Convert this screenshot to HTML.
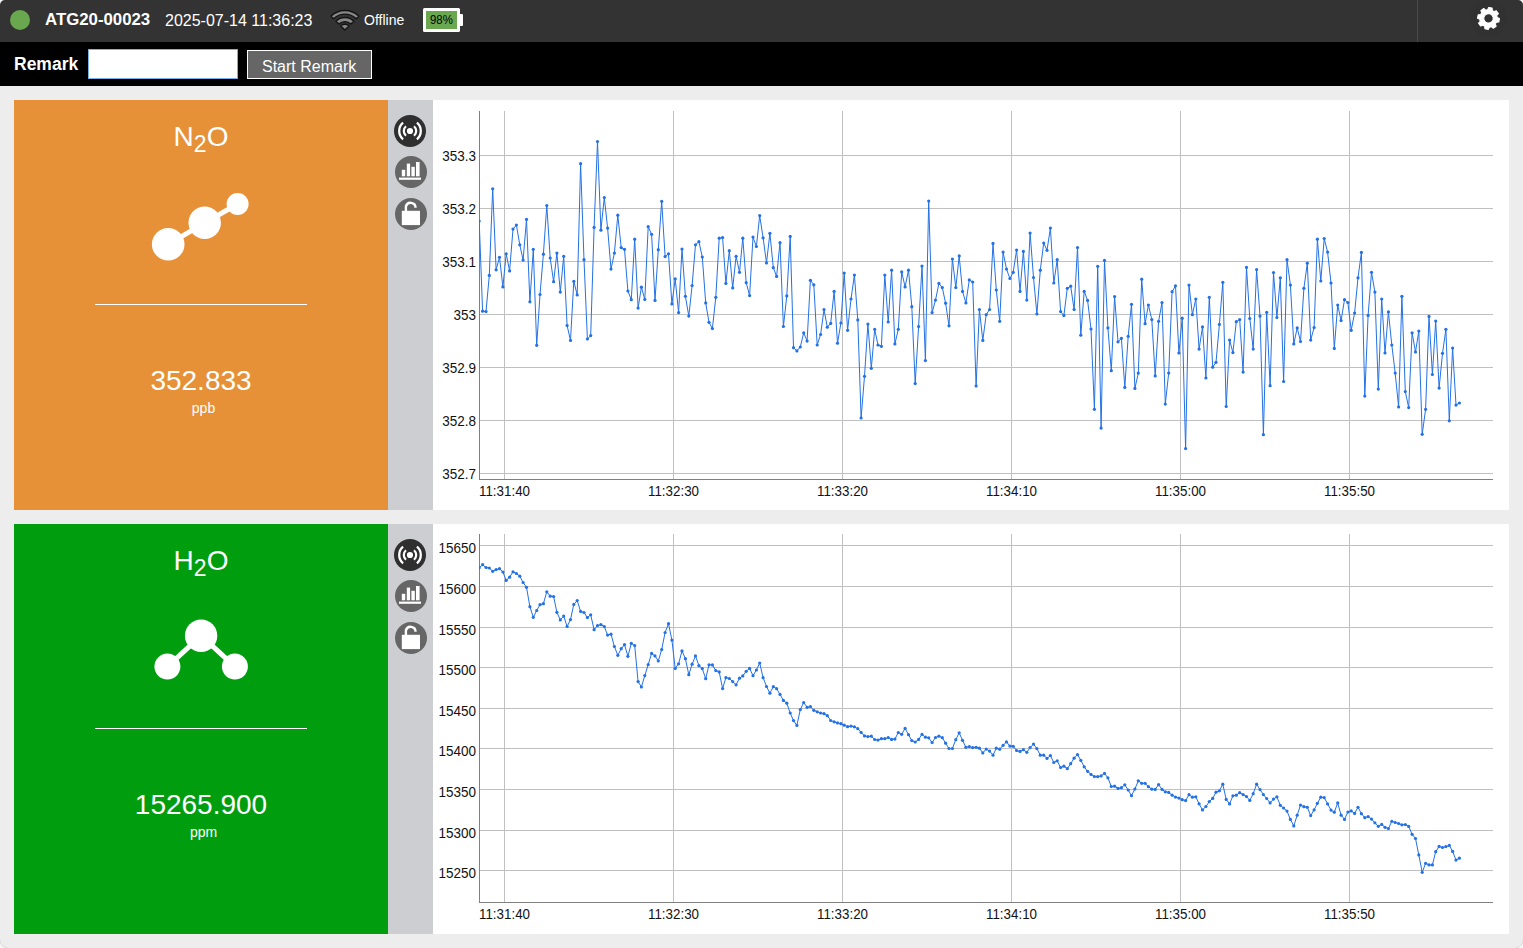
<!DOCTYPE html>
<html><head><meta charset="utf-8"><title>ATG20-00023</title>
<style>
*{box-sizing:border-box}
html,body{margin:0;padding:0}
body{width:1523px;height:948px;overflow:hidden;background:#ededed;font-family:"Liberation Sans",sans-serif;position:relative}
.abs{position:absolute;white-space:nowrap;line-height:1}
#hdr{position:absolute;left:0;top:0;width:1523px;height:42px;background:#333333}
#sep{position:absolute;left:1417px;top:0;width:1px;height:42px;background:#4a4a4a}
#rbar{position:absolute;left:0;top:42px;width:1523px;height:44px;background:#000}
#inp{position:absolute;left:88px;top:49px;width:150px;height:30px;background:#fff;border:1px solid #78b0ea}
#btn{position:absolute;left:247px;top:50px;width:125px;height:29px;background:#666;border:1px solid #fff}
.panel{position:absolute;left:14px;width:374px;height:410px}
.side{position:absolute;left:388px;width:45px;height:410px;background:#cdced2}
.cwrap{position:absolute;left:433px;width:1076px;height:410px;background:#fff}
svg.chart{position:absolute}
.ptitle{position:absolute;left:14px;width:374px;text-align:center;color:#fff;font-size:28px;line-height:30px;white-space:nowrap}
.ptitle sub{font-size:23px;line-height:0;vertical-align:-6px}
.hr{position:absolute;left:95px;width:212px;height:1px;background:#fff}
.pval{position:absolute;left:14px;width:374px;text-align:center;color:#fff;font-size:28px;line-height:30px;white-space:nowrap}
.punit{position:absolute;left:16.5px;width:374px;text-align:center;color:#fff;font-size:14px;line-height:16px;white-space:nowrap}
</style></head><body>
<div id="hdr"></div>
<div id="sep"></div>
<svg class="abs" style="left:0;top:0" width="1523" height="42">
  <circle cx="20" cy="20" r="10" fill="#6aa84f"/>
  <!-- wifi -->
  <g fill="#888888" stroke="#141414" stroke-width="1.4" stroke-linejoin="round">
    <path d="M344.9 30.1 L340.8 26 A5.8 5.8 0 0 1 349 26 Z"/>
    <path d="M338.9 24.1 A8.5 8.5 0 0 1 350.9 24.1 L353.8 21.2 A12.6 12.6 0 0 0 336 21.2 Z"/>
    <path d="M333.6 18.8 A16 16 0 0 1 356.2 18.8 L358.8 16.2 A19.7 19.7 0 0 0 331 16.2 Z"/>
  </g>
  <!-- battery -->
  <rect x="423" y="8" width="37" height="24" rx="1.5" fill="#ffffff"/>
  <rect x="459" y="14" width="4" height="12" rx="1" fill="#ffffff"/>
  <rect x="426" y="11" width="31" height="18" fill="#6aa84f"/>
  <!-- gear -->
  <circle cx="1488.5" cy="18.4" r="18" fill="#313131"/>
  <g transform="translate(1488.5 18.4) rotate(10)">
    <path fill="#ffffff" stroke="#ffffff" stroke-width="1" stroke-linejoin="round" fill-rule="evenodd" d="M-2.39 -8.47 L-1.81 -10.85 L1.81 -10.85 L2.39 -8.47 L4.30 -7.68 L6.40 -8.95 L8.95 -6.40 L7.68 -4.30 L8.47 -2.39 L10.85 -1.81 L10.85 1.81 L8.47 2.39 L7.68 4.30 L8.95 6.40 L6.40 8.95 L4.30 7.68 L2.39 8.47 L1.81 10.85 L-1.81 10.85 L-2.39 8.47 L-4.30 7.68 L-6.40 8.95 L-8.95 6.40 L-7.68 4.30 L-8.47 2.39 L-10.85 1.81 L-10.85 -1.81 L-8.47 -2.39 L-7.68 -4.30 L-8.95 -6.40 L-6.40 -8.95 L-4.30 -7.68 Z M4.70 0.00 A4.7 4.7 0 1 0 -4.70 0.00 A4.7 4.7 0 1 0 4.70 0.00 Z"/>
  </g>
</svg>
<div class="abs" style="left:45px;top:12px;font-size:16px;font-weight:bold;color:#fff;transform:scaleX(1.05);transform-origin:0 0">ATG20-00023</div>
<div class="abs" style="left:165px;top:13px;font-size:16px;color:#fff">2025-07-14 11:36:23</div>
<div class="abs" style="left:364px;top:13px;font-size:14px;color:#fff">Offline</div>
<div class="abs" style="left:430px;top:14px;font-size:12px;color:#000;transform:scaleX(0.95);transform-origin:0 0">98%</div>

<div id="rbar"></div>
<div class="abs" style="left:14px;top:55.5px;font-size:17.5px;font-weight:bold;color:#fff">Remark</div>
<div id="inp"></div>
<div id="btn"></div>
<div class="abs" style="left:262px;top:59px;font-size:16px;color:#fff">Start Remark</div>

<!-- Panel 1 -->
<div class="panel" style="top:100px;background:#e69138"></div>
<div class="side" style="top:100px"></div>
<div class="cwrap" style="top:100px"></div>
<svg class="abs" style="left:388px;top:100px" width="45" height="140" viewBox="388 100 45 140">
<circle cx="410" cy="131" r="16" fill="#2f2f2f"/>
<circle cx="410" cy="131" r="3.1" fill="#fff"/>
<path d="M406.01 126.25 A6.2 6.2 0 0 0 406.01 135.75" fill="none" stroke="#fff" stroke-width="2.2"/>
<path d="M413.99 126.25 A6.2 6.2 0 0 1 413.99 135.75" fill="none" stroke="#fff" stroke-width="2.2"/>
<path d="M403.06 122.73 A10.8 10.8 0 0 0 403.06 139.27" fill="none" stroke="#fff" stroke-width="2.3"/>
<path d="M416.94 122.73 A10.8 10.8 0 0 1 416.94 139.27" fill="none" stroke="#fff" stroke-width="2.3"/>
<circle cx="411" cy="172" r="16" fill="#666666"/>
<rect x="401.8" y="169.8" width="3.40" height="6.50" fill="#fff"/>
<rect x="406.8" y="163.6" width="3.30" height="12.70" fill="#fff"/>
<rect x="411.4" y="166.8" width="3.40" height="9.50" fill="#fff"/>
<rect x="416.0" y="162.0" width="3.60" height="14.30" fill="#fff"/>
<rect x="399" y="177.6" width="22" height="2.2" fill="#fff"/>
<circle cx="411" cy="214" r="16" fill="#666666"/>
<rect x="401.8" y="210.8" width="18.2" height="14.3" fill="#fff"/>
<path d="M405.90 211 L405.90 206.40 A4.9 4.9 0 0 1 415.53 207.67" fill="none" stroke="#fff" stroke-width="2.4"/>
</svg>
<div class="ptitle" style="top:121.5px">N<sub>2</sub>O</div>
<svg class="abs" style="left:14px;top:100px" width="374" height="200" viewBox="14 100 374 200"><path d="M168.2 244.3 L204.7 222.8 L237.6 204" stroke="#fff" stroke-width="5" fill="none"/><circle cx="168.2" cy="244.3" r="16.3" fill="#fff"/><circle cx="204.7" cy="222.8" r="16.2" fill="#fff"/><circle cx="237.6" cy="204" r="11" fill="#fff"/></svg>
<div class="hr" style="top:304px"></div>
<div class="pval" style="top:366px">352.833</div>
<div class="punit" style="top:400px">ppb</div>
<svg class="chart" width="1076" height="410" viewBox="433 100 1076 410" style="left:433px;top:100px">
<g shape-rendering="crispEdges">
<rect x="480" y="155" width="1013" height="1" fill="#c0c0c0"/>
<rect x="480" y="208" width="1013" height="1" fill="#c0c0c0"/>
<rect x="480" y="261" width="1013" height="1" fill="#c0c0c0"/>
<rect x="480" y="314" width="1013" height="1" fill="#c0c0c0"/>
<rect x="480" y="367" width="1013" height="1" fill="#c0c0c0"/>
<rect x="480" y="420" width="1013" height="1" fill="#c0c0c0"/>
<rect x="480" y="473" width="1013" height="1" fill="#c0c0c0"/>
<rect x="504" y="111" width="1" height="368" fill="#c0c0c0"/>
<rect x="673" y="111" width="1" height="368" fill="#c0c0c0"/>
<rect x="842" y="111" width="1" height="368" fill="#c0c0c0"/>
<rect x="1011" y="111" width="1" height="368" fill="#c0c0c0"/>
<rect x="1180" y="111" width="1" height="368" fill="#c0c0c0"/>
<rect x="1349" y="111" width="1" height="368" fill="#c0c0c0"/>
<rect x="479" y="111" width="1" height="369" fill="#808080"/>
<rect x="479" y="479" width="1014" height="1" fill="#808080"/>
</g>
<g font-family="Liberation Sans, sans-serif" font-size="14" fill="#111111">
<text transform="translate(476 161) scale(0.965 1)" text-anchor="end">353.3</text>
<text transform="translate(476 214) scale(0.965 1)" text-anchor="end">353.2</text>
<text transform="translate(476 267) scale(0.965 1)" text-anchor="end">353.1</text>
<text transform="translate(476 320) scale(0.965 1)" text-anchor="end">353</text>
<text transform="translate(476 373) scale(0.965 1)" text-anchor="end">352.9</text>
<text transform="translate(476 426) scale(0.965 1)" text-anchor="end">352.8</text>
<text transform="translate(476 479) scale(0.965 1)" text-anchor="end">352.7</text>
<text transform="translate(504.5 496) scale(0.955 1)" text-anchor="middle">11:31:40</text>
<text transform="translate(673.5 496) scale(0.955 1)" text-anchor="middle">11:32:30</text>
<text transform="translate(842.5 496) scale(0.955 1)" text-anchor="middle">11:33:20</text>
<text transform="translate(1011.5 496) scale(0.955 1)" text-anchor="middle">11:34:10</text>
<text transform="translate(1180.5 496) scale(0.955 1)" text-anchor="middle">11:35:00</text>
<text transform="translate(1349.5 496) scale(0.955 1)" text-anchor="middle">11:35:50</text>
</g>
<defs><clipPath id="clip100"><rect x="479" y="111" width="1014" height="368"/></clipPath></defs>
<g clip-path="url(#clip100)">
<polyline points="479.2,221.1 482.6,311.2 486.0,311.6 489.3,275.4 492.7,188.8 496.1,269.8 499.5,257.3 502.9,286.9 506.2,253.8 509.6,270.9 513.0,229.1 516.4,225.0 519.8,244.8 523.1,260.1 526.5,219.4 529.9,301.8 533.3,249.3 536.7,345.3 540.0,294.5 543.4,254.2 546.8,205.5 550.2,258.0 553.6,281.7 556.9,253.1 560.3,292.1 563.7,256.3 567.1,325.5 570.5,340.4 573.8,281.3 577.2,294.9 580.6,163.7 584.0,259.7 587.4,339.0 590.7,335.6 594.1,227.4 597.5,141.5 600.9,230.2 604.3,197.5 607.6,228.1 611.0,269.1 614.4,253.1 617.8,215.2 621.2,247.6 624.5,249.3 627.9,291.0 631.3,299.7 634.7,239.2 638.1,308.1 641.4,287.2 644.8,299.4 648.2,226.7 651.6,234.3 655.0,300.4 658.3,249.7 661.7,201.3 665.1,256.6 668.5,253.8 671.9,303.9 675.2,278.9 678.6,312.6 682.0,249.0 685.4,296.3 688.8,316.1 692.1,285.5 695.5,244.8 698.9,241.7 702.3,257.0 705.7,302.9 709.0,322.3 712.4,328.6 715.8,297.3 719.2,238.2 722.6,237.5 725.9,283.4 729.3,250.7 732.7,287.9 736.1,256.3 739.5,272.3 742.8,238.2 746.2,282.7 749.6,295.6 753.0,237.1 756.4,246.5 759.7,215.6 763.1,237.8 766.5,262.9 769.9,233.3 773.3,267.7 776.6,276.4 780.0,242.7 783.4,326.5 786.8,295.9 790.2,236.4 793.5,347.7 796.9,350.9 800.3,347.0 803.7,332.8 807.1,341.1 810.4,280.3 813.8,284.8 817.2,345.0 820.6,334.5 824.0,309.5 827.3,327.2 830.7,323.4 834.1,291.4 837.5,343.2 840.9,323.0 844.2,273.0 847.6,330.3 851.0,299.0 854.4,275.0 857.8,319.9 861.1,418.0 864.5,376.3 867.9,324.1 871.3,368.3 874.7,329.3 878.0,345.0 881.4,346.3 884.8,275.0 888.2,322.0 891.6,270.2 894.9,343.9 898.3,329.3 901.7,271.9 905.1,286.9 908.5,270.2 911.8,306.7 915.2,383.6 918.6,326.5 922.0,266.0 925.4,360.6 928.7,201.0 932.1,312.6 935.5,300.1 938.9,283.4 942.3,287.6 945.6,303.2 949.0,325.8 952.4,259.0 955.8,287.6 959.2,255.9 962.5,291.4 965.9,302.9 969.3,279.9 972.7,282.0 976.1,386.0 979.4,309.5 982.8,340.4 986.2,314.7 989.6,309.5 993.0,243.4 996.3,290.0 999.7,321.3 1003.1,252.1 1006.5,269.1 1009.9,278.5 1013.2,272.3 1016.6,250.0 1020.0,291.4 1023.4,251.4 1026.8,300.1 1030.1,233.0 1033.5,277.5 1036.9,314.0 1040.3,270.2 1043.7,243.0 1047.0,250.3 1050.4,228.1 1053.8,283.0 1057.2,259.7 1060.6,311.6 1063.9,315.4 1067.3,288.3 1070.7,286.2 1074.1,309.5 1077.5,247.6 1080.8,335.2 1084.2,291.4 1087.6,300.4 1091.0,329.0 1094.4,409.3 1097.7,266.3 1101.1,428.1 1104.5,260.4 1107.9,327.9 1111.3,370.7 1114.6,296.6 1118.0,341.8 1121.4,338.3 1124.8,387.4 1128.2,336.3 1131.5,304.3 1134.9,388.4 1138.3,373.1 1141.7,279.2 1145.1,323.7 1148.4,305.0 1151.8,319.6 1155.2,375.9 1158.6,321.3 1162.0,302.5 1165.3,404.1 1168.7,373.1 1172.1,291.7 1175.5,285.8 1178.9,353.0 1182.2,318.2 1185.6,448.6 1189.0,285.1 1192.4,314.7 1195.8,299.0 1199.1,349.1 1202.5,326.9 1205.9,378.0 1209.3,297.3 1212.7,367.2 1216.0,362.3 1219.4,324.4 1222.8,282.3 1226.2,406.5 1229.6,340.1 1232.9,352.6 1236.3,321.7 1239.7,319.6 1243.1,372.1 1246.5,267.4 1249.8,318.5 1253.2,349.1 1256.6,269.5 1260.0,316.1 1263.4,434.7 1266.7,312.3 1270.1,385.7 1273.5,272.6 1276.9,317.5 1280.3,277.8 1283.6,381.5 1287.0,259.7 1290.4,285.1 1293.8,343.9 1297.2,327.9 1300.5,341.5 1303.9,288.3 1307.3,263.2 1310.7,340.1 1314.1,327.6 1317.4,239.2 1320.8,281.0 1324.2,238.5 1327.6,252.1 1331.0,283.0 1334.3,348.4 1337.7,305.0 1341.1,320.6 1344.5,299.7 1347.9,302.5 1351.2,330.3 1354.6,313.0 1358.0,277.8 1361.4,252.4 1364.8,396.1 1368.1,315.4 1371.5,272.3 1374.9,292.1 1378.3,389.1 1381.7,299.0 1385.0,353.0 1388.4,311.9 1391.8,345.0 1395.2,373.1 1398.6,406.9 1401.9,296.3 1405.3,391.6 1408.7,407.6 1412.1,332.8 1415.5,351.9 1418.8,331.0 1422.2,434.3 1425.6,409.3 1429.0,316.4 1432.4,374.5 1435.7,321.0 1439.1,388.1 1442.5,353.3 1445.9,329.3 1449.3,420.8 1452.6,348.1 1456.0,405.1 1459.4,403.0" fill="none" stroke="#2371e6" stroke-width="1"/>
<g fill="#2371e6">
<circle cx="479.2" cy="221.1" r="1.6"/>
<circle cx="482.6" cy="311.2" r="1.6"/>
<circle cx="486.0" cy="311.6" r="1.6"/>
<circle cx="489.3" cy="275.4" r="1.6"/>
<circle cx="492.7" cy="188.8" r="1.6"/>
<circle cx="496.1" cy="269.8" r="1.6"/>
<circle cx="499.5" cy="257.3" r="1.6"/>
<circle cx="502.9" cy="286.9" r="1.6"/>
<circle cx="506.2" cy="253.8" r="1.6"/>
<circle cx="509.6" cy="270.9" r="1.6"/>
<circle cx="513.0" cy="229.1" r="1.6"/>
<circle cx="516.4" cy="225.0" r="1.6"/>
<circle cx="519.8" cy="244.8" r="1.6"/>
<circle cx="523.1" cy="260.1" r="1.6"/>
<circle cx="526.5" cy="219.4" r="1.6"/>
<circle cx="529.9" cy="301.8" r="1.6"/>
<circle cx="533.3" cy="249.3" r="1.6"/>
<circle cx="536.7" cy="345.3" r="1.6"/>
<circle cx="540.0" cy="294.5" r="1.6"/>
<circle cx="543.4" cy="254.2" r="1.6"/>
<circle cx="546.8" cy="205.5" r="1.6"/>
<circle cx="550.2" cy="258.0" r="1.6"/>
<circle cx="553.6" cy="281.7" r="1.6"/>
<circle cx="556.9" cy="253.1" r="1.6"/>
<circle cx="560.3" cy="292.1" r="1.6"/>
<circle cx="563.7" cy="256.3" r="1.6"/>
<circle cx="567.1" cy="325.5" r="1.6"/>
<circle cx="570.5" cy="340.4" r="1.6"/>
<circle cx="573.8" cy="281.3" r="1.6"/>
<circle cx="577.2" cy="294.9" r="1.6"/>
<circle cx="580.6" cy="163.7" r="1.6"/>
<circle cx="584.0" cy="259.7" r="1.6"/>
<circle cx="587.4" cy="339.0" r="1.6"/>
<circle cx="590.7" cy="335.6" r="1.6"/>
<circle cx="594.1" cy="227.4" r="1.6"/>
<circle cx="597.5" cy="141.5" r="1.6"/>
<circle cx="600.9" cy="230.2" r="1.6"/>
<circle cx="604.3" cy="197.5" r="1.6"/>
<circle cx="607.6" cy="228.1" r="1.6"/>
<circle cx="611.0" cy="269.1" r="1.6"/>
<circle cx="614.4" cy="253.1" r="1.6"/>
<circle cx="617.8" cy="215.2" r="1.6"/>
<circle cx="621.2" cy="247.6" r="1.6"/>
<circle cx="624.5" cy="249.3" r="1.6"/>
<circle cx="627.9" cy="291.0" r="1.6"/>
<circle cx="631.3" cy="299.7" r="1.6"/>
<circle cx="634.7" cy="239.2" r="1.6"/>
<circle cx="638.1" cy="308.1" r="1.6"/>
<circle cx="641.4" cy="287.2" r="1.6"/>
<circle cx="644.8" cy="299.4" r="1.6"/>
<circle cx="648.2" cy="226.7" r="1.6"/>
<circle cx="651.6" cy="234.3" r="1.6"/>
<circle cx="655.0" cy="300.4" r="1.6"/>
<circle cx="658.3" cy="249.7" r="1.6"/>
<circle cx="661.7" cy="201.3" r="1.6"/>
<circle cx="665.1" cy="256.6" r="1.6"/>
<circle cx="668.5" cy="253.8" r="1.6"/>
<circle cx="671.9" cy="303.9" r="1.6"/>
<circle cx="675.2" cy="278.9" r="1.6"/>
<circle cx="678.6" cy="312.6" r="1.6"/>
<circle cx="682.0" cy="249.0" r="1.6"/>
<circle cx="685.4" cy="296.3" r="1.6"/>
<circle cx="688.8" cy="316.1" r="1.6"/>
<circle cx="692.1" cy="285.5" r="1.6"/>
<circle cx="695.5" cy="244.8" r="1.6"/>
<circle cx="698.9" cy="241.7" r="1.6"/>
<circle cx="702.3" cy="257.0" r="1.6"/>
<circle cx="705.7" cy="302.9" r="1.6"/>
<circle cx="709.0" cy="322.3" r="1.6"/>
<circle cx="712.4" cy="328.6" r="1.6"/>
<circle cx="715.8" cy="297.3" r="1.6"/>
<circle cx="719.2" cy="238.2" r="1.6"/>
<circle cx="722.6" cy="237.5" r="1.6"/>
<circle cx="725.9" cy="283.4" r="1.6"/>
<circle cx="729.3" cy="250.7" r="1.6"/>
<circle cx="732.7" cy="287.9" r="1.6"/>
<circle cx="736.1" cy="256.3" r="1.6"/>
<circle cx="739.5" cy="272.3" r="1.6"/>
<circle cx="742.8" cy="238.2" r="1.6"/>
<circle cx="746.2" cy="282.7" r="1.6"/>
<circle cx="749.6" cy="295.6" r="1.6"/>
<circle cx="753.0" cy="237.1" r="1.6"/>
<circle cx="756.4" cy="246.5" r="1.6"/>
<circle cx="759.7" cy="215.6" r="1.6"/>
<circle cx="763.1" cy="237.8" r="1.6"/>
<circle cx="766.5" cy="262.9" r="1.6"/>
<circle cx="769.9" cy="233.3" r="1.6"/>
<circle cx="773.3" cy="267.7" r="1.6"/>
<circle cx="776.6" cy="276.4" r="1.6"/>
<circle cx="780.0" cy="242.7" r="1.6"/>
<circle cx="783.4" cy="326.5" r="1.6"/>
<circle cx="786.8" cy="295.9" r="1.6"/>
<circle cx="790.2" cy="236.4" r="1.6"/>
<circle cx="793.5" cy="347.7" r="1.6"/>
<circle cx="796.9" cy="350.9" r="1.6"/>
<circle cx="800.3" cy="347.0" r="1.6"/>
<circle cx="803.7" cy="332.8" r="1.6"/>
<circle cx="807.1" cy="341.1" r="1.6"/>
<circle cx="810.4" cy="280.3" r="1.6"/>
<circle cx="813.8" cy="284.8" r="1.6"/>
<circle cx="817.2" cy="345.0" r="1.6"/>
<circle cx="820.6" cy="334.5" r="1.6"/>
<circle cx="824.0" cy="309.5" r="1.6"/>
<circle cx="827.3" cy="327.2" r="1.6"/>
<circle cx="830.7" cy="323.4" r="1.6"/>
<circle cx="834.1" cy="291.4" r="1.6"/>
<circle cx="837.5" cy="343.2" r="1.6"/>
<circle cx="840.9" cy="323.0" r="1.6"/>
<circle cx="844.2" cy="273.0" r="1.6"/>
<circle cx="847.6" cy="330.3" r="1.6"/>
<circle cx="851.0" cy="299.0" r="1.6"/>
<circle cx="854.4" cy="275.0" r="1.6"/>
<circle cx="857.8" cy="319.9" r="1.6"/>
<circle cx="861.1" cy="418.0" r="1.6"/>
<circle cx="864.5" cy="376.3" r="1.6"/>
<circle cx="867.9" cy="324.1" r="1.6"/>
<circle cx="871.3" cy="368.3" r="1.6"/>
<circle cx="874.7" cy="329.3" r="1.6"/>
<circle cx="878.0" cy="345.0" r="1.6"/>
<circle cx="881.4" cy="346.3" r="1.6"/>
<circle cx="884.8" cy="275.0" r="1.6"/>
<circle cx="888.2" cy="322.0" r="1.6"/>
<circle cx="891.6" cy="270.2" r="1.6"/>
<circle cx="894.9" cy="343.9" r="1.6"/>
<circle cx="898.3" cy="329.3" r="1.6"/>
<circle cx="901.7" cy="271.9" r="1.6"/>
<circle cx="905.1" cy="286.9" r="1.6"/>
<circle cx="908.5" cy="270.2" r="1.6"/>
<circle cx="911.8" cy="306.7" r="1.6"/>
<circle cx="915.2" cy="383.6" r="1.6"/>
<circle cx="918.6" cy="326.5" r="1.6"/>
<circle cx="922.0" cy="266.0" r="1.6"/>
<circle cx="925.4" cy="360.6" r="1.6"/>
<circle cx="928.7" cy="201.0" r="1.6"/>
<circle cx="932.1" cy="312.6" r="1.6"/>
<circle cx="935.5" cy="300.1" r="1.6"/>
<circle cx="938.9" cy="283.4" r="1.6"/>
<circle cx="942.3" cy="287.6" r="1.6"/>
<circle cx="945.6" cy="303.2" r="1.6"/>
<circle cx="949.0" cy="325.8" r="1.6"/>
<circle cx="952.4" cy="259.0" r="1.6"/>
<circle cx="955.8" cy="287.6" r="1.6"/>
<circle cx="959.2" cy="255.9" r="1.6"/>
<circle cx="962.5" cy="291.4" r="1.6"/>
<circle cx="965.9" cy="302.9" r="1.6"/>
<circle cx="969.3" cy="279.9" r="1.6"/>
<circle cx="972.7" cy="282.0" r="1.6"/>
<circle cx="976.1" cy="386.0" r="1.6"/>
<circle cx="979.4" cy="309.5" r="1.6"/>
<circle cx="982.8" cy="340.4" r="1.6"/>
<circle cx="986.2" cy="314.7" r="1.6"/>
<circle cx="989.6" cy="309.5" r="1.6"/>
<circle cx="993.0" cy="243.4" r="1.6"/>
<circle cx="996.3" cy="290.0" r="1.6"/>
<circle cx="999.7" cy="321.3" r="1.6"/>
<circle cx="1003.1" cy="252.1" r="1.6"/>
<circle cx="1006.5" cy="269.1" r="1.6"/>
<circle cx="1009.9" cy="278.5" r="1.6"/>
<circle cx="1013.2" cy="272.3" r="1.6"/>
<circle cx="1016.6" cy="250.0" r="1.6"/>
<circle cx="1020.0" cy="291.4" r="1.6"/>
<circle cx="1023.4" cy="251.4" r="1.6"/>
<circle cx="1026.8" cy="300.1" r="1.6"/>
<circle cx="1030.1" cy="233.0" r="1.6"/>
<circle cx="1033.5" cy="277.5" r="1.6"/>
<circle cx="1036.9" cy="314.0" r="1.6"/>
<circle cx="1040.3" cy="270.2" r="1.6"/>
<circle cx="1043.7" cy="243.0" r="1.6"/>
<circle cx="1047.0" cy="250.3" r="1.6"/>
<circle cx="1050.4" cy="228.1" r="1.6"/>
<circle cx="1053.8" cy="283.0" r="1.6"/>
<circle cx="1057.2" cy="259.7" r="1.6"/>
<circle cx="1060.6" cy="311.6" r="1.6"/>
<circle cx="1063.9" cy="315.4" r="1.6"/>
<circle cx="1067.3" cy="288.3" r="1.6"/>
<circle cx="1070.7" cy="286.2" r="1.6"/>
<circle cx="1074.1" cy="309.5" r="1.6"/>
<circle cx="1077.5" cy="247.6" r="1.6"/>
<circle cx="1080.8" cy="335.2" r="1.6"/>
<circle cx="1084.2" cy="291.4" r="1.6"/>
<circle cx="1087.6" cy="300.4" r="1.6"/>
<circle cx="1091.0" cy="329.0" r="1.6"/>
<circle cx="1094.4" cy="409.3" r="1.6"/>
<circle cx="1097.7" cy="266.3" r="1.6"/>
<circle cx="1101.1" cy="428.1" r="1.6"/>
<circle cx="1104.5" cy="260.4" r="1.6"/>
<circle cx="1107.9" cy="327.9" r="1.6"/>
<circle cx="1111.3" cy="370.7" r="1.6"/>
<circle cx="1114.6" cy="296.6" r="1.6"/>
<circle cx="1118.0" cy="341.8" r="1.6"/>
<circle cx="1121.4" cy="338.3" r="1.6"/>
<circle cx="1124.8" cy="387.4" r="1.6"/>
<circle cx="1128.2" cy="336.3" r="1.6"/>
<circle cx="1131.5" cy="304.3" r="1.6"/>
<circle cx="1134.9" cy="388.4" r="1.6"/>
<circle cx="1138.3" cy="373.1" r="1.6"/>
<circle cx="1141.7" cy="279.2" r="1.6"/>
<circle cx="1145.1" cy="323.7" r="1.6"/>
<circle cx="1148.4" cy="305.0" r="1.6"/>
<circle cx="1151.8" cy="319.6" r="1.6"/>
<circle cx="1155.2" cy="375.9" r="1.6"/>
<circle cx="1158.6" cy="321.3" r="1.6"/>
<circle cx="1162.0" cy="302.5" r="1.6"/>
<circle cx="1165.3" cy="404.1" r="1.6"/>
<circle cx="1168.7" cy="373.1" r="1.6"/>
<circle cx="1172.1" cy="291.7" r="1.6"/>
<circle cx="1175.5" cy="285.8" r="1.6"/>
<circle cx="1178.9" cy="353.0" r="1.6"/>
<circle cx="1182.2" cy="318.2" r="1.6"/>
<circle cx="1185.6" cy="448.6" r="1.6"/>
<circle cx="1189.0" cy="285.1" r="1.6"/>
<circle cx="1192.4" cy="314.7" r="1.6"/>
<circle cx="1195.8" cy="299.0" r="1.6"/>
<circle cx="1199.1" cy="349.1" r="1.6"/>
<circle cx="1202.5" cy="326.9" r="1.6"/>
<circle cx="1205.9" cy="378.0" r="1.6"/>
<circle cx="1209.3" cy="297.3" r="1.6"/>
<circle cx="1212.7" cy="367.2" r="1.6"/>
<circle cx="1216.0" cy="362.3" r="1.6"/>
<circle cx="1219.4" cy="324.4" r="1.6"/>
<circle cx="1222.8" cy="282.3" r="1.6"/>
<circle cx="1226.2" cy="406.5" r="1.6"/>
<circle cx="1229.6" cy="340.1" r="1.6"/>
<circle cx="1232.9" cy="352.6" r="1.6"/>
<circle cx="1236.3" cy="321.7" r="1.6"/>
<circle cx="1239.7" cy="319.6" r="1.6"/>
<circle cx="1243.1" cy="372.1" r="1.6"/>
<circle cx="1246.5" cy="267.4" r="1.6"/>
<circle cx="1249.8" cy="318.5" r="1.6"/>
<circle cx="1253.2" cy="349.1" r="1.6"/>
<circle cx="1256.6" cy="269.5" r="1.6"/>
<circle cx="1260.0" cy="316.1" r="1.6"/>
<circle cx="1263.4" cy="434.7" r="1.6"/>
<circle cx="1266.7" cy="312.3" r="1.6"/>
<circle cx="1270.1" cy="385.7" r="1.6"/>
<circle cx="1273.5" cy="272.6" r="1.6"/>
<circle cx="1276.9" cy="317.5" r="1.6"/>
<circle cx="1280.3" cy="277.8" r="1.6"/>
<circle cx="1283.6" cy="381.5" r="1.6"/>
<circle cx="1287.0" cy="259.7" r="1.6"/>
<circle cx="1290.4" cy="285.1" r="1.6"/>
<circle cx="1293.8" cy="343.9" r="1.6"/>
<circle cx="1297.2" cy="327.9" r="1.6"/>
<circle cx="1300.5" cy="341.5" r="1.6"/>
<circle cx="1303.9" cy="288.3" r="1.6"/>
<circle cx="1307.3" cy="263.2" r="1.6"/>
<circle cx="1310.7" cy="340.1" r="1.6"/>
<circle cx="1314.1" cy="327.6" r="1.6"/>
<circle cx="1317.4" cy="239.2" r="1.6"/>
<circle cx="1320.8" cy="281.0" r="1.6"/>
<circle cx="1324.2" cy="238.5" r="1.6"/>
<circle cx="1327.6" cy="252.1" r="1.6"/>
<circle cx="1331.0" cy="283.0" r="1.6"/>
<circle cx="1334.3" cy="348.4" r="1.6"/>
<circle cx="1337.7" cy="305.0" r="1.6"/>
<circle cx="1341.1" cy="320.6" r="1.6"/>
<circle cx="1344.5" cy="299.7" r="1.6"/>
<circle cx="1347.9" cy="302.5" r="1.6"/>
<circle cx="1351.2" cy="330.3" r="1.6"/>
<circle cx="1354.6" cy="313.0" r="1.6"/>
<circle cx="1358.0" cy="277.8" r="1.6"/>
<circle cx="1361.4" cy="252.4" r="1.6"/>
<circle cx="1364.8" cy="396.1" r="1.6"/>
<circle cx="1368.1" cy="315.4" r="1.6"/>
<circle cx="1371.5" cy="272.3" r="1.6"/>
<circle cx="1374.9" cy="292.1" r="1.6"/>
<circle cx="1378.3" cy="389.1" r="1.6"/>
<circle cx="1381.7" cy="299.0" r="1.6"/>
<circle cx="1385.0" cy="353.0" r="1.6"/>
<circle cx="1388.4" cy="311.9" r="1.6"/>
<circle cx="1391.8" cy="345.0" r="1.6"/>
<circle cx="1395.2" cy="373.1" r="1.6"/>
<circle cx="1398.6" cy="406.9" r="1.6"/>
<circle cx="1401.9" cy="296.3" r="1.6"/>
<circle cx="1405.3" cy="391.6" r="1.6"/>
<circle cx="1408.7" cy="407.6" r="1.6"/>
<circle cx="1412.1" cy="332.8" r="1.6"/>
<circle cx="1415.5" cy="351.9" r="1.6"/>
<circle cx="1418.8" cy="331.0" r="1.6"/>
<circle cx="1422.2" cy="434.3" r="1.6"/>
<circle cx="1425.6" cy="409.3" r="1.6"/>
<circle cx="1429.0" cy="316.4" r="1.6"/>
<circle cx="1432.4" cy="374.5" r="1.6"/>
<circle cx="1435.7" cy="321.0" r="1.6"/>
<circle cx="1439.1" cy="388.1" r="1.6"/>
<circle cx="1442.5" cy="353.3" r="1.6"/>
<circle cx="1445.9" cy="329.3" r="1.6"/>
<circle cx="1449.3" cy="420.8" r="1.6"/>
<circle cx="1452.6" cy="348.1" r="1.6"/>
<circle cx="1456.0" cy="405.1" r="1.6"/>
<circle cx="1459.4" cy="403.0" r="1.6"/>
</g></g></svg>
<!-- Panel 2 -->
<div class="panel" style="top:524px;background:#009e0f"></div>
<div class="side" style="top:524px"></div>
<div class="cwrap" style="top:524px"></div>
<svg class="abs" style="left:388px;top:524px" width="45" height="140" viewBox="388 524 45 140">
<circle cx="410" cy="555" r="16" fill="#2f2f2f"/>
<circle cx="410" cy="555" r="3.1" fill="#fff"/>
<path d="M406.01 550.25 A6.2 6.2 0 0 0 406.01 559.75" fill="none" stroke="#fff" stroke-width="2.2"/>
<path d="M413.99 550.25 A6.2 6.2 0 0 1 413.99 559.75" fill="none" stroke="#fff" stroke-width="2.2"/>
<path d="M403.06 546.73 A10.8 10.8 0 0 0 403.06 563.27" fill="none" stroke="#fff" stroke-width="2.3"/>
<path d="M416.94 546.73 A10.8 10.8 0 0 1 416.94 563.27" fill="none" stroke="#fff" stroke-width="2.3"/>
<circle cx="411" cy="596" r="16" fill="#666666"/>
<rect x="401.8" y="593.8" width="3.40" height="6.50" fill="#fff"/>
<rect x="406.8" y="587.6" width="3.30" height="12.70" fill="#fff"/>
<rect x="411.4" y="590.8" width="3.40" height="9.50" fill="#fff"/>
<rect x="416.0" y="586.0" width="3.60" height="14.30" fill="#fff"/>
<rect x="399" y="601.6" width="22" height="2.2" fill="#fff"/>
<circle cx="411" cy="638" r="16" fill="#666666"/>
<rect x="401.8" y="634.8" width="18.2" height="14.3" fill="#fff"/>
<path d="M405.90 635 L405.90 630.40 A4.9 4.9 0 0 1 415.53 631.67" fill="none" stroke="#fff" stroke-width="2.4"/>
</svg>
<div class="ptitle" style="top:545.5px">H<sub>2</sub>O</div>
<svg class="abs" style="left:14px;top:524px" width="374" height="200" viewBox="14 524 374 200"><path d="M167.4 666.6 L201.1 635.7 L234.9 666.6" stroke="#fff" stroke-width="5" fill="none"/><circle cx="201.1" cy="635.7" r="16.2" fill="#fff"/><circle cx="167.4" cy="666.6" r="13" fill="#fff"/><circle cx="234.9" cy="666.6" r="13" fill="#fff"/></svg>
<div class="hr" style="top:728px"></div>
<div class="pval" style="top:790px">15265.900</div>
<div class="punit" style="top:824px">ppm</div>
<svg class="chart" width="1076" height="410" viewBox="433 524 1076 410" style="left:433px;top:524px">
<g shape-rendering="crispEdges">
<rect x="480" y="545" width="1013" height="1" fill="#c0c0c0"/>
<rect x="480" y="586" width="1013" height="1" fill="#c0c0c0"/>
<rect x="480" y="627" width="1013" height="1" fill="#c0c0c0"/>
<rect x="480" y="667" width="1013" height="1" fill="#c0c0c0"/>
<rect x="480" y="708" width="1013" height="1" fill="#c0c0c0"/>
<rect x="480" y="748" width="1013" height="1" fill="#c0c0c0"/>
<rect x="480" y="789" width="1013" height="1" fill="#c0c0c0"/>
<rect x="480" y="830" width="1013" height="1" fill="#c0c0c0"/>
<rect x="480" y="870" width="1013" height="1" fill="#c0c0c0"/>
<rect x="504" y="534" width="1" height="368" fill="#c0c0c0"/>
<rect x="673" y="534" width="1" height="368" fill="#c0c0c0"/>
<rect x="842" y="534" width="1" height="368" fill="#c0c0c0"/>
<rect x="1011" y="534" width="1" height="368" fill="#c0c0c0"/>
<rect x="1180" y="534" width="1" height="368" fill="#c0c0c0"/>
<rect x="1349" y="534" width="1" height="368" fill="#c0c0c0"/>
<rect x="479" y="534" width="1" height="369" fill="#808080"/>
<rect x="479" y="902" width="1014" height="1" fill="#808080"/>
</g>
<g font-family="Liberation Sans, sans-serif" font-size="14" fill="#111111">
<text transform="translate(476 553) scale(0.965 1)" text-anchor="end">15650</text>
<text transform="translate(476 594) scale(0.965 1)" text-anchor="end">15600</text>
<text transform="translate(476 635) scale(0.965 1)" text-anchor="end">15550</text>
<text transform="translate(476 675) scale(0.965 1)" text-anchor="end">15500</text>
<text transform="translate(476 716) scale(0.965 1)" text-anchor="end">15450</text>
<text transform="translate(476 756) scale(0.965 1)" text-anchor="end">15400</text>
<text transform="translate(476 797) scale(0.965 1)" text-anchor="end">15350</text>
<text transform="translate(476 838) scale(0.965 1)" text-anchor="end">15300</text>
<text transform="translate(476 878) scale(0.965 1)" text-anchor="end">15250</text>
<text transform="translate(504.5 919) scale(0.955 1)" text-anchor="middle">11:31:40</text>
<text transform="translate(673.5 919) scale(0.955 1)" text-anchor="middle">11:32:30</text>
<text transform="translate(842.5 919) scale(0.955 1)" text-anchor="middle">11:33:20</text>
<text transform="translate(1011.5 919) scale(0.955 1)" text-anchor="middle">11:34:10</text>
<text transform="translate(1180.5 919) scale(0.955 1)" text-anchor="middle">11:35:00</text>
<text transform="translate(1349.5 919) scale(0.955 1)" text-anchor="middle">11:35:50</text>
</g>
<defs><clipPath id="clip524"><rect x="479" y="534" width="1014" height="368"/></clipPath></defs>
<g clip-path="url(#clip524)">
<polyline points="479.2,567.7 482.6,564.7 486.0,567.5 489.3,568.0 492.7,571.3 496.1,569.6 499.5,568.7 502.9,572.0 506.2,580.4 509.6,577.2 513.0,571.8 516.4,573.5 519.8,576.2 523.1,582.5 526.5,587.3 529.9,606.7 533.3,617.3 536.7,610.5 540.0,604.7 543.4,603.7 546.8,591.8 550.2,596.2 553.6,596.5 556.9,612.3 560.3,619.9 563.7,616.1 567.1,626.5 570.5,619.6 573.8,604.4 577.2,600.6 580.6,611.4 584.0,612.5 587.4,617.6 590.7,614.8 594.1,629.7 597.5,625.6 600.9,624.6 604.3,626.6 607.6,635.1 611.0,634.2 614.4,646.5 617.8,655.3 621.2,648.7 624.5,644.6 627.9,656.3 631.3,643.3 634.7,645.6 638.1,681.6 641.4,687.0 644.8,675.6 648.2,664.6 651.6,653.4 655.0,655.9 658.3,661.0 661.7,649.6 665.1,632.5 668.5,623.7 671.9,640.1 675.2,668.4 678.6,663.8 682.0,650.9 685.4,658.7 688.8,674.7 692.1,664.2 695.5,655.9 698.9,665.6 702.3,668.6 705.7,678.7 709.0,664.8 712.4,664.9 715.8,670.6 719.2,671.9 722.6,688.6 725.9,677.6 729.3,678.5 732.7,681.6 736.1,684.8 739.5,678.2 742.8,675.9 746.2,671.3 749.6,668.4 753.0,675.7 756.4,670.0 759.7,663.0 763.1,677.7 766.5,686.5 769.9,693.2 773.3,686.7 776.6,688.7 780.0,694.4 783.4,700.4 786.8,703.2 790.2,713.0 793.5,720.6 796.9,725.4 800.3,709.5 803.7,702.5 807.1,707.3 810.4,706.5 813.8,710.3 817.2,711.8 820.6,713.0 824.0,713.7 827.3,715.7 830.7,720.5 834.1,721.8 837.5,722.9 840.9,723.7 844.2,725.2 847.6,726.7 851.0,726.1 854.4,726.8 857.8,728.7 861.1,732.4 864.5,735.9 867.9,736.6 871.3,736.2 874.7,739.5 878.0,740.1 881.4,738.7 884.8,738.7 888.2,737.6 891.6,739.4 894.9,739.1 898.3,732.5 901.7,734.3 905.1,728.4 908.5,734.7 911.8,740.6 915.2,742.0 918.6,739.4 922.0,734.4 925.4,737.2 928.7,737.8 932.1,742.5 935.5,737.5 938.9,736.2 942.3,737.7 945.6,743.2 949.0,748.5 952.4,748.5 955.8,739.7 959.2,732.8 962.5,740.3 965.9,747.3 969.3,746.6 972.7,747.6 976.1,747.3 979.4,748.2 982.8,752.9 986.2,749.1 989.6,751.1 993.0,755.2 996.3,748.2 999.7,749.2 1003.1,745.3 1006.5,741.9 1009.9,746.1 1013.2,746.3 1016.6,750.5 1020.0,751.4 1023.4,749.7 1026.8,752.3 1030.1,747.6 1033.5,744.1 1036.9,748.6 1040.3,755.2 1043.7,755.2 1047.0,758.4 1050.4,755.6 1053.8,762.5 1057.2,760.8 1060.6,767.5 1063.9,766.2 1067.3,768.7 1070.7,763.7 1074.1,758.2 1077.5,754.6 1080.8,760.3 1084.2,766.8 1087.6,771.3 1091.0,774.4 1094.4,776.6 1097.7,776.7 1101.1,775.9 1104.5,773.4 1107.9,777.8 1111.3,786.5 1114.6,786.2 1118.0,788.4 1121.4,787.7 1124.8,784.8 1128.2,790.0 1131.5,795.7 1134.9,789.0 1138.3,780.8 1141.7,783.3 1145.1,783.3 1148.4,786.7 1151.8,789.2 1155.2,789.4 1158.6,784.6 1162.0,789.4 1165.3,791.8 1168.7,792.4 1172.1,795.2 1175.5,797.1 1178.9,798.1 1182.2,799.7 1185.6,800.6 1189.0,794.7 1192.4,797.2 1195.8,796.8 1199.1,803.8 1202.5,809.9 1205.9,806.5 1209.3,801.6 1212.7,798.4 1216.0,792.2 1219.4,790.8 1222.8,784.2 1226.2,799.4 1229.6,803.9 1232.9,795.8 1236.3,795.2 1239.7,792.7 1243.1,794.6 1246.5,796.5 1249.8,800.4 1253.2,793.7 1256.6,784.2 1260.0,789.6 1263.4,794.6 1266.7,798.5 1270.1,802.9 1273.5,799.1 1276.9,796.8 1280.3,805.3 1283.6,808.0 1287.0,811.1 1290.4,819.4 1293.8,825.9 1297.2,815.2 1300.5,805.1 1303.9,806.7 1307.3,807.3 1310.7,815.6 1314.1,809.9 1317.4,803.3 1320.8,797.2 1324.2,797.6 1327.6,803.9 1331.0,810.1 1334.3,812.2 1337.7,802.9 1341.1,815.2 1344.5,819.4 1347.9,812.0 1351.2,810.9 1354.6,813.4 1358.0,807.3 1361.4,813.7 1364.8,817.7 1368.1,816.6 1371.5,819.1 1374.9,822.8 1378.3,826.3 1381.7,824.4 1385.0,827.3 1388.4,828.6 1391.8,821.3 1395.2,822.5 1398.6,823.5 1401.9,824.8 1405.3,824.6 1408.7,826.4 1412.1,834.3 1415.5,838.5 1418.8,854.9 1422.2,872.3 1425.6,863.3 1429.0,864.9 1432.4,864.9 1435.7,851.7 1439.1,846.4 1442.5,847.5 1445.9,846.6 1449.3,845.4 1452.6,851.4 1456.0,860.1 1459.4,858.2" fill="none" stroke="#2371e6" stroke-width="1"/>
<g fill="#2371e6">
<circle cx="479.2" cy="567.7" r="1.6"/>
<circle cx="482.6" cy="564.7" r="1.6"/>
<circle cx="486.0" cy="567.5" r="1.6"/>
<circle cx="489.3" cy="568.0" r="1.6"/>
<circle cx="492.7" cy="571.3" r="1.6"/>
<circle cx="496.1" cy="569.6" r="1.6"/>
<circle cx="499.5" cy="568.7" r="1.6"/>
<circle cx="502.9" cy="572.0" r="1.6"/>
<circle cx="506.2" cy="580.4" r="1.6"/>
<circle cx="509.6" cy="577.2" r="1.6"/>
<circle cx="513.0" cy="571.8" r="1.6"/>
<circle cx="516.4" cy="573.5" r="1.6"/>
<circle cx="519.8" cy="576.2" r="1.6"/>
<circle cx="523.1" cy="582.5" r="1.6"/>
<circle cx="526.5" cy="587.3" r="1.6"/>
<circle cx="529.9" cy="606.7" r="1.6"/>
<circle cx="533.3" cy="617.3" r="1.6"/>
<circle cx="536.7" cy="610.5" r="1.6"/>
<circle cx="540.0" cy="604.7" r="1.6"/>
<circle cx="543.4" cy="603.7" r="1.6"/>
<circle cx="546.8" cy="591.8" r="1.6"/>
<circle cx="550.2" cy="596.2" r="1.6"/>
<circle cx="553.6" cy="596.5" r="1.6"/>
<circle cx="556.9" cy="612.3" r="1.6"/>
<circle cx="560.3" cy="619.9" r="1.6"/>
<circle cx="563.7" cy="616.1" r="1.6"/>
<circle cx="567.1" cy="626.5" r="1.6"/>
<circle cx="570.5" cy="619.6" r="1.6"/>
<circle cx="573.8" cy="604.4" r="1.6"/>
<circle cx="577.2" cy="600.6" r="1.6"/>
<circle cx="580.6" cy="611.4" r="1.6"/>
<circle cx="584.0" cy="612.5" r="1.6"/>
<circle cx="587.4" cy="617.6" r="1.6"/>
<circle cx="590.7" cy="614.8" r="1.6"/>
<circle cx="594.1" cy="629.7" r="1.6"/>
<circle cx="597.5" cy="625.6" r="1.6"/>
<circle cx="600.9" cy="624.6" r="1.6"/>
<circle cx="604.3" cy="626.6" r="1.6"/>
<circle cx="607.6" cy="635.1" r="1.6"/>
<circle cx="611.0" cy="634.2" r="1.6"/>
<circle cx="614.4" cy="646.5" r="1.6"/>
<circle cx="617.8" cy="655.3" r="1.6"/>
<circle cx="621.2" cy="648.7" r="1.6"/>
<circle cx="624.5" cy="644.6" r="1.6"/>
<circle cx="627.9" cy="656.3" r="1.6"/>
<circle cx="631.3" cy="643.3" r="1.6"/>
<circle cx="634.7" cy="645.6" r="1.6"/>
<circle cx="638.1" cy="681.6" r="1.6"/>
<circle cx="641.4" cy="687.0" r="1.6"/>
<circle cx="644.8" cy="675.6" r="1.6"/>
<circle cx="648.2" cy="664.6" r="1.6"/>
<circle cx="651.6" cy="653.4" r="1.6"/>
<circle cx="655.0" cy="655.9" r="1.6"/>
<circle cx="658.3" cy="661.0" r="1.6"/>
<circle cx="661.7" cy="649.6" r="1.6"/>
<circle cx="665.1" cy="632.5" r="1.6"/>
<circle cx="668.5" cy="623.7" r="1.6"/>
<circle cx="671.9" cy="640.1" r="1.6"/>
<circle cx="675.2" cy="668.4" r="1.6"/>
<circle cx="678.6" cy="663.8" r="1.6"/>
<circle cx="682.0" cy="650.9" r="1.6"/>
<circle cx="685.4" cy="658.7" r="1.6"/>
<circle cx="688.8" cy="674.7" r="1.6"/>
<circle cx="692.1" cy="664.2" r="1.6"/>
<circle cx="695.5" cy="655.9" r="1.6"/>
<circle cx="698.9" cy="665.6" r="1.6"/>
<circle cx="702.3" cy="668.6" r="1.6"/>
<circle cx="705.7" cy="678.7" r="1.6"/>
<circle cx="709.0" cy="664.8" r="1.6"/>
<circle cx="712.4" cy="664.9" r="1.6"/>
<circle cx="715.8" cy="670.6" r="1.6"/>
<circle cx="719.2" cy="671.9" r="1.6"/>
<circle cx="722.6" cy="688.6" r="1.6"/>
<circle cx="725.9" cy="677.6" r="1.6"/>
<circle cx="729.3" cy="678.5" r="1.6"/>
<circle cx="732.7" cy="681.6" r="1.6"/>
<circle cx="736.1" cy="684.8" r="1.6"/>
<circle cx="739.5" cy="678.2" r="1.6"/>
<circle cx="742.8" cy="675.9" r="1.6"/>
<circle cx="746.2" cy="671.3" r="1.6"/>
<circle cx="749.6" cy="668.4" r="1.6"/>
<circle cx="753.0" cy="675.7" r="1.6"/>
<circle cx="756.4" cy="670.0" r="1.6"/>
<circle cx="759.7" cy="663.0" r="1.6"/>
<circle cx="763.1" cy="677.7" r="1.6"/>
<circle cx="766.5" cy="686.5" r="1.6"/>
<circle cx="769.9" cy="693.2" r="1.6"/>
<circle cx="773.3" cy="686.7" r="1.6"/>
<circle cx="776.6" cy="688.7" r="1.6"/>
<circle cx="780.0" cy="694.4" r="1.6"/>
<circle cx="783.4" cy="700.4" r="1.6"/>
<circle cx="786.8" cy="703.2" r="1.6"/>
<circle cx="790.2" cy="713.0" r="1.6"/>
<circle cx="793.5" cy="720.6" r="1.6"/>
<circle cx="796.9" cy="725.4" r="1.6"/>
<circle cx="800.3" cy="709.5" r="1.6"/>
<circle cx="803.7" cy="702.5" r="1.6"/>
<circle cx="807.1" cy="707.3" r="1.6"/>
<circle cx="810.4" cy="706.5" r="1.6"/>
<circle cx="813.8" cy="710.3" r="1.6"/>
<circle cx="817.2" cy="711.8" r="1.6"/>
<circle cx="820.6" cy="713.0" r="1.6"/>
<circle cx="824.0" cy="713.7" r="1.6"/>
<circle cx="827.3" cy="715.7" r="1.6"/>
<circle cx="830.7" cy="720.5" r="1.6"/>
<circle cx="834.1" cy="721.8" r="1.6"/>
<circle cx="837.5" cy="722.9" r="1.6"/>
<circle cx="840.9" cy="723.7" r="1.6"/>
<circle cx="844.2" cy="725.2" r="1.6"/>
<circle cx="847.6" cy="726.7" r="1.6"/>
<circle cx="851.0" cy="726.1" r="1.6"/>
<circle cx="854.4" cy="726.8" r="1.6"/>
<circle cx="857.8" cy="728.7" r="1.6"/>
<circle cx="861.1" cy="732.4" r="1.6"/>
<circle cx="864.5" cy="735.9" r="1.6"/>
<circle cx="867.9" cy="736.6" r="1.6"/>
<circle cx="871.3" cy="736.2" r="1.6"/>
<circle cx="874.7" cy="739.5" r="1.6"/>
<circle cx="878.0" cy="740.1" r="1.6"/>
<circle cx="881.4" cy="738.7" r="1.6"/>
<circle cx="884.8" cy="738.7" r="1.6"/>
<circle cx="888.2" cy="737.6" r="1.6"/>
<circle cx="891.6" cy="739.4" r="1.6"/>
<circle cx="894.9" cy="739.1" r="1.6"/>
<circle cx="898.3" cy="732.5" r="1.6"/>
<circle cx="901.7" cy="734.3" r="1.6"/>
<circle cx="905.1" cy="728.4" r="1.6"/>
<circle cx="908.5" cy="734.7" r="1.6"/>
<circle cx="911.8" cy="740.6" r="1.6"/>
<circle cx="915.2" cy="742.0" r="1.6"/>
<circle cx="918.6" cy="739.4" r="1.6"/>
<circle cx="922.0" cy="734.4" r="1.6"/>
<circle cx="925.4" cy="737.2" r="1.6"/>
<circle cx="928.7" cy="737.8" r="1.6"/>
<circle cx="932.1" cy="742.5" r="1.6"/>
<circle cx="935.5" cy="737.5" r="1.6"/>
<circle cx="938.9" cy="736.2" r="1.6"/>
<circle cx="942.3" cy="737.7" r="1.6"/>
<circle cx="945.6" cy="743.2" r="1.6"/>
<circle cx="949.0" cy="748.5" r="1.6"/>
<circle cx="952.4" cy="748.5" r="1.6"/>
<circle cx="955.8" cy="739.7" r="1.6"/>
<circle cx="959.2" cy="732.8" r="1.6"/>
<circle cx="962.5" cy="740.3" r="1.6"/>
<circle cx="965.9" cy="747.3" r="1.6"/>
<circle cx="969.3" cy="746.6" r="1.6"/>
<circle cx="972.7" cy="747.6" r="1.6"/>
<circle cx="976.1" cy="747.3" r="1.6"/>
<circle cx="979.4" cy="748.2" r="1.6"/>
<circle cx="982.8" cy="752.9" r="1.6"/>
<circle cx="986.2" cy="749.1" r="1.6"/>
<circle cx="989.6" cy="751.1" r="1.6"/>
<circle cx="993.0" cy="755.2" r="1.6"/>
<circle cx="996.3" cy="748.2" r="1.6"/>
<circle cx="999.7" cy="749.2" r="1.6"/>
<circle cx="1003.1" cy="745.3" r="1.6"/>
<circle cx="1006.5" cy="741.9" r="1.6"/>
<circle cx="1009.9" cy="746.1" r="1.6"/>
<circle cx="1013.2" cy="746.3" r="1.6"/>
<circle cx="1016.6" cy="750.5" r="1.6"/>
<circle cx="1020.0" cy="751.4" r="1.6"/>
<circle cx="1023.4" cy="749.7" r="1.6"/>
<circle cx="1026.8" cy="752.3" r="1.6"/>
<circle cx="1030.1" cy="747.6" r="1.6"/>
<circle cx="1033.5" cy="744.1" r="1.6"/>
<circle cx="1036.9" cy="748.6" r="1.6"/>
<circle cx="1040.3" cy="755.2" r="1.6"/>
<circle cx="1043.7" cy="755.2" r="1.6"/>
<circle cx="1047.0" cy="758.4" r="1.6"/>
<circle cx="1050.4" cy="755.6" r="1.6"/>
<circle cx="1053.8" cy="762.5" r="1.6"/>
<circle cx="1057.2" cy="760.8" r="1.6"/>
<circle cx="1060.6" cy="767.5" r="1.6"/>
<circle cx="1063.9" cy="766.2" r="1.6"/>
<circle cx="1067.3" cy="768.7" r="1.6"/>
<circle cx="1070.7" cy="763.7" r="1.6"/>
<circle cx="1074.1" cy="758.2" r="1.6"/>
<circle cx="1077.5" cy="754.6" r="1.6"/>
<circle cx="1080.8" cy="760.3" r="1.6"/>
<circle cx="1084.2" cy="766.8" r="1.6"/>
<circle cx="1087.6" cy="771.3" r="1.6"/>
<circle cx="1091.0" cy="774.4" r="1.6"/>
<circle cx="1094.4" cy="776.6" r="1.6"/>
<circle cx="1097.7" cy="776.7" r="1.6"/>
<circle cx="1101.1" cy="775.9" r="1.6"/>
<circle cx="1104.5" cy="773.4" r="1.6"/>
<circle cx="1107.9" cy="777.8" r="1.6"/>
<circle cx="1111.3" cy="786.5" r="1.6"/>
<circle cx="1114.6" cy="786.2" r="1.6"/>
<circle cx="1118.0" cy="788.4" r="1.6"/>
<circle cx="1121.4" cy="787.7" r="1.6"/>
<circle cx="1124.8" cy="784.8" r="1.6"/>
<circle cx="1128.2" cy="790.0" r="1.6"/>
<circle cx="1131.5" cy="795.7" r="1.6"/>
<circle cx="1134.9" cy="789.0" r="1.6"/>
<circle cx="1138.3" cy="780.8" r="1.6"/>
<circle cx="1141.7" cy="783.3" r="1.6"/>
<circle cx="1145.1" cy="783.3" r="1.6"/>
<circle cx="1148.4" cy="786.7" r="1.6"/>
<circle cx="1151.8" cy="789.2" r="1.6"/>
<circle cx="1155.2" cy="789.4" r="1.6"/>
<circle cx="1158.6" cy="784.6" r="1.6"/>
<circle cx="1162.0" cy="789.4" r="1.6"/>
<circle cx="1165.3" cy="791.8" r="1.6"/>
<circle cx="1168.7" cy="792.4" r="1.6"/>
<circle cx="1172.1" cy="795.2" r="1.6"/>
<circle cx="1175.5" cy="797.1" r="1.6"/>
<circle cx="1178.9" cy="798.1" r="1.6"/>
<circle cx="1182.2" cy="799.7" r="1.6"/>
<circle cx="1185.6" cy="800.6" r="1.6"/>
<circle cx="1189.0" cy="794.7" r="1.6"/>
<circle cx="1192.4" cy="797.2" r="1.6"/>
<circle cx="1195.8" cy="796.8" r="1.6"/>
<circle cx="1199.1" cy="803.8" r="1.6"/>
<circle cx="1202.5" cy="809.9" r="1.6"/>
<circle cx="1205.9" cy="806.5" r="1.6"/>
<circle cx="1209.3" cy="801.6" r="1.6"/>
<circle cx="1212.7" cy="798.4" r="1.6"/>
<circle cx="1216.0" cy="792.2" r="1.6"/>
<circle cx="1219.4" cy="790.8" r="1.6"/>
<circle cx="1222.8" cy="784.2" r="1.6"/>
<circle cx="1226.2" cy="799.4" r="1.6"/>
<circle cx="1229.6" cy="803.9" r="1.6"/>
<circle cx="1232.9" cy="795.8" r="1.6"/>
<circle cx="1236.3" cy="795.2" r="1.6"/>
<circle cx="1239.7" cy="792.7" r="1.6"/>
<circle cx="1243.1" cy="794.6" r="1.6"/>
<circle cx="1246.5" cy="796.5" r="1.6"/>
<circle cx="1249.8" cy="800.4" r="1.6"/>
<circle cx="1253.2" cy="793.7" r="1.6"/>
<circle cx="1256.6" cy="784.2" r="1.6"/>
<circle cx="1260.0" cy="789.6" r="1.6"/>
<circle cx="1263.4" cy="794.6" r="1.6"/>
<circle cx="1266.7" cy="798.5" r="1.6"/>
<circle cx="1270.1" cy="802.9" r="1.6"/>
<circle cx="1273.5" cy="799.1" r="1.6"/>
<circle cx="1276.9" cy="796.8" r="1.6"/>
<circle cx="1280.3" cy="805.3" r="1.6"/>
<circle cx="1283.6" cy="808.0" r="1.6"/>
<circle cx="1287.0" cy="811.1" r="1.6"/>
<circle cx="1290.4" cy="819.4" r="1.6"/>
<circle cx="1293.8" cy="825.9" r="1.6"/>
<circle cx="1297.2" cy="815.2" r="1.6"/>
<circle cx="1300.5" cy="805.1" r="1.6"/>
<circle cx="1303.9" cy="806.7" r="1.6"/>
<circle cx="1307.3" cy="807.3" r="1.6"/>
<circle cx="1310.7" cy="815.6" r="1.6"/>
<circle cx="1314.1" cy="809.9" r="1.6"/>
<circle cx="1317.4" cy="803.3" r="1.6"/>
<circle cx="1320.8" cy="797.2" r="1.6"/>
<circle cx="1324.2" cy="797.6" r="1.6"/>
<circle cx="1327.6" cy="803.9" r="1.6"/>
<circle cx="1331.0" cy="810.1" r="1.6"/>
<circle cx="1334.3" cy="812.2" r="1.6"/>
<circle cx="1337.7" cy="802.9" r="1.6"/>
<circle cx="1341.1" cy="815.2" r="1.6"/>
<circle cx="1344.5" cy="819.4" r="1.6"/>
<circle cx="1347.9" cy="812.0" r="1.6"/>
<circle cx="1351.2" cy="810.9" r="1.6"/>
<circle cx="1354.6" cy="813.4" r="1.6"/>
<circle cx="1358.0" cy="807.3" r="1.6"/>
<circle cx="1361.4" cy="813.7" r="1.6"/>
<circle cx="1364.8" cy="817.7" r="1.6"/>
<circle cx="1368.1" cy="816.6" r="1.6"/>
<circle cx="1371.5" cy="819.1" r="1.6"/>
<circle cx="1374.9" cy="822.8" r="1.6"/>
<circle cx="1378.3" cy="826.3" r="1.6"/>
<circle cx="1381.7" cy="824.4" r="1.6"/>
<circle cx="1385.0" cy="827.3" r="1.6"/>
<circle cx="1388.4" cy="828.6" r="1.6"/>
<circle cx="1391.8" cy="821.3" r="1.6"/>
<circle cx="1395.2" cy="822.5" r="1.6"/>
<circle cx="1398.6" cy="823.5" r="1.6"/>
<circle cx="1401.9" cy="824.8" r="1.6"/>
<circle cx="1405.3" cy="824.6" r="1.6"/>
<circle cx="1408.7" cy="826.4" r="1.6"/>
<circle cx="1412.1" cy="834.3" r="1.6"/>
<circle cx="1415.5" cy="838.5" r="1.6"/>
<circle cx="1418.8" cy="854.9" r="1.6"/>
<circle cx="1422.2" cy="872.3" r="1.6"/>
<circle cx="1425.6" cy="863.3" r="1.6"/>
<circle cx="1429.0" cy="864.9" r="1.6"/>
<circle cx="1432.4" cy="864.9" r="1.6"/>
<circle cx="1435.7" cy="851.7" r="1.6"/>
<circle cx="1439.1" cy="846.4" r="1.6"/>
<circle cx="1442.5" cy="847.5" r="1.6"/>
<circle cx="1445.9" cy="846.6" r="1.6"/>
<circle cx="1449.3" cy="845.4" r="1.6"/>
<circle cx="1452.6" cy="851.4" r="1.6"/>
<circle cx="1456.0" cy="860.1" r="1.6"/>
<circle cx="1459.4" cy="858.2" r="1.6"/>
</g></g></svg>
<svg class="abs" style="left:0;top:0;pointer-events:none" width="1523" height="948">
  <path d="M0 0 H5 A5 5 0 0 0 0 5 Z" fill="#f4f4f4"/>
  <path d="M1523 0 H1518 A5 5 0 0 1 1523 5 Z" fill="#f4f4f4"/>
  <path d="M0 940 A8 8 0 0 0 8 948 H0 Z" fill="#f7f7f7"/>
  <path d="M0 940 A8 8 0 0 0 8 948" fill="none" stroke="#dadada" stroke-width="1"/>
  <path d="M1523 940 A8 8 0 0 1 1515 948 H1523 Z" fill="#f7f7f7"/>
  <path d="M1523 940 A8 8 0 0 1 1515 948" fill="none" stroke="#dadada" stroke-width="1"/>
</svg>
</body></html>
